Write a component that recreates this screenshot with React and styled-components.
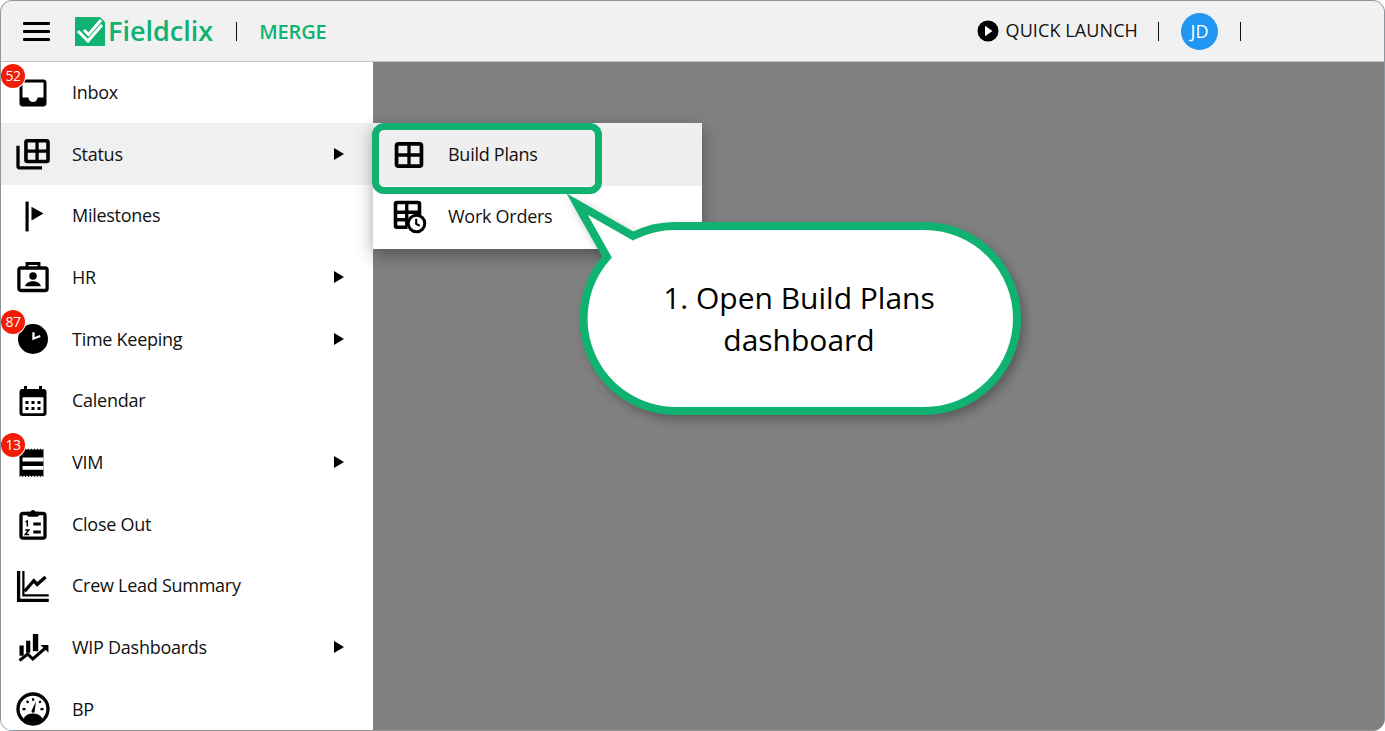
import React from "react";
import styled, { createGlobalStyle } from "styled-components";

const GREEN = "#0fb271";
const Global = createGlobalStyle`
  html, body { margin: 0; padding: 0; background: #fff; }
  body { font-family: "Open Sans", "Noto Sans", "Liberation Sans", sans-serif; color: #0b0b0b; }
`;
const Frame = styled.div`
  position: relative; width: 1385px; height: 731px; box-sizing: border-box;
  border: 1px solid #8d959c; border-radius: 12px; overflow: hidden;
  display: flex; flex-direction: column; background: #808080;
`;
const Header = styled.header`
  flex: 0 0 61px; box-sizing: border-box; height: 61px; background: #f1f1f1;
  border-bottom: 1px solid #c6c6c6; display: flex; align-items: center; padding-left: 22px;
`;
const Burger = styled.div`
  width: 27px; display: flex; flex-direction: column; gap: 5px; margin-right: 25px;
  span { display: block; height: 3px; background: #000; border-radius: 1px; }
`;
const LogoText = styled.span`
  font-size: 27px; font-weight: 600; color: ${GREEN}; margin-left: 3px; line-height: 30px;
`;
const Sep = styled.i`
  display: block; width: 1px; height: 19px; background: #111; margin: 0 ${p => p.$r}px 0 ${p => p.$l}px;
`;
const Merge = styled.span`
  font-size: 20px; font-weight: 600; color: ${GREEN}; letter-spacing: -0.1px;
`;
const Right = styled.div`
  margin-left: auto; display: flex; align-items: center; padding-right: 143px;
`;
const Quick = styled.span`
  font-size: 18px; margin: -2px 0 0 7px; letter-spacing: 0.1px; color: #111;
`;
const Avatar = styled.div`
  width: 37px; height: 37px; border-radius: 50%; background: #2196f3; color: #fff;
  display: flex; align-items: center; justify-content: center; font-size: 18px;
`;
const Body = styled.div`
  flex: 1; display: flex; min-height: 0;
`;
const Sidebar = styled.nav`
  width: 372px; background: #fff; overflow: hidden; flex: none;
`;
const Row = styled.div`
  height: 61.7px; display: flex; align-items: center; background: ${p => (p.$active ? "#f0f0f0" : "#fff")};
  padding-left: 14px; padding-right: 29px; box-sizing: border-box;
  &:first-child { height: 61px; }
`;
const IconWrap = styled.div`
  position: relative; width: 36px; height: 36px; flex: none; margin-right: 21px;
  svg { display: block; width: 36px; height: 36px; }
`;
const Badge = styled.span`
  position: absolute; left: -14px; top: -11px; width: 24px; height: 24px; border-radius: 50%;
  background: #f31c06; color: #fff; font-size: 14px; line-height: 24px; text-align: center;
  letter-spacing: -0.4px; box-shadow: 0 0 0 1px #fff;
`;
const Label = styled.span`
  font-size: 18px; letter-spacing: -0.27px; flex: 1; color: #111; margin-top: -0.4px;
`;
const Arrow = styled.i`
  width: 0; height: 0; border-left: 10px solid #000; border-top: 6px solid transparent; border-bottom: 6px solid transparent;
`;
const Content = styled.main`
  flex: 1; background: #808080;
`;
const Popup = styled.div`
  position: absolute; left: 372px; top: 122px; width: 329px; background: #fff;
  box-shadow: 0 6px 16px rgba(0,0,0,.35);
`;
const PopRow = styled.div`
  height: 63px; display: flex; align-items: center; background: ${p => (p.$active ? "#efefef" : "#fff")};
  padding: 0 0 ${p => (p.$active ? 0 : 3)}px 18px; box-sizing: border-box;
  svg { width: 36px; height: 36px; display: block; margin-right: 21px; flex: none; }
`;
const Highlight = styled.div`
  position: absolute; left: 371px; top: 122px; width: 230px; height: 71px; box-sizing: border-box;
  border: 7px solid ${GREEN}; border-radius: 12px;
`;
const Callout = styled.svg`
  position: absolute; left: 559px; top: 189px; width: 480px; height: 240px; overflow: visible;
  filter: drop-shadow(4px 5px 5px rgba(0,0,0,.28));
`;
const CalloutText = styled.div`
  position: absolute; left: 598px; top: 276px; width: 400px; text-align: center;
  font-size: 30px; line-height: 42px; color: #000;
`;

const S = { fill: "none", stroke: "#000", strokeWidth: 2 };
const I = ({ children }) => <svg viewBox="0 0 24 24">{children}</svg>;
const icons = {
  inbox: <I><path d="M19 3H4.99c-1.11 0-1.98.89-1.98 2L3 19c0 1.1.88 2 1.99 2H19c1.1 0 2-.9 2-2V5c0-1.11-.9-2-2-2zm0 12h-4c0 1.66-1.35 3-3 3s-3-1.34-3-3H4.99V5H19v10z" /></I>,
  status: <I><rect x="7.3" y="3.2" width="14.7" height="13.8" rx="1" {...S} strokeWidth="2.4" /><path d="M7.500 10.100h14.500M14.700 3.500v13" {...S} strokeWidth="2.2" /><path d="M2 6.500V20.200a1 1 0 0 0 1 1h15" {...S} strokeWidth="2.2" /></I>,
  milestones: <I><rect x="7" y="2.300" width="2.100" height="20" rx=".5" /><path d="M11 5.800l8 4.600-8 4.600z" /></I>,
  hr: <I><path d="M8 6.500V3h8v3.500" {...S} strokeWidth="1.900" /><rect x="2.600" y="6" width="18.800" height="15" rx="1.400" {...S} strokeWidth="2.200" /><circle cx="12" cy="11.400" r="2.500" /><path d="M6.800 18.200c0-2.200 3-3.400 5.200-3.400s5.200 1.200 5.200 3.400z" /></I>,
  time: <I><circle cx="12" cy="12" r="10" /><path d="M12.300 7.500v4.300l4.500-1.800" fill="none" stroke="#fff" strokeWidth="1.500" /></I>,
  calendar: <I><path d="M6 2h2v2h8V2h2v2h1a2 2 0 0 1 2 2v14a2 2 0 0 1-2 2H5a2 2 0 0 1-2-2V6a2 2 0 0 1 2-2h1z" /><rect x="5" y="9.500" width="14" height="10.600" rx=".5" fill="#fff" /><path d="M7 12h2v2H7zM11 12h2v2h-2zM15 12h2v2h-2zM7 16h2v2H7zM11 16h2v2h-2zM15 16h2v2h-2z" /></I>,
  vim: <I><path d="M3 3l1 1 1-1 1 1 1-1 1 1 1-1 1 1 1-1 1 1 1-1 1 1 1-1 1 1 1-1 1 1 1-1v19l-1-1-1 1-1-1-1 1-1-1-1 1-1-1-1 1-1-1-1 1-1-1-1 1-1-1-1 1-1-1-1 1z" /><path d="M5 9h14v2.600H5zM5 14.600h14v2.600H5z" fill="#fff" /></I>,
  close: <I><rect x="4" y="5" width="16" height="16.400" rx="1.400" {...S} strokeWidth="2.200" /><path d="M8 5.200V3.800h2.400a1.700 1.700 0 0 1 3.200 0H16v1.400a1.600 1.600 0 0 1-1 2H9a1.600 1.600 0 0 1-1-2z" /><path d="M7 10.600l1.200-.6v3.600M6.800 16h2.400l-2.400 3h2.600" fill="none" stroke="#000" strokeWidth="1" /><path d="M12.200 11h5v2h-5zM12.200 16.400h5v2h-5z" /></I>,
  crew: <I><path d="M2.400 2v19.600H22.500" {...S} strokeWidth="2.200" /><path d="M5.600 2v16.200h16.900" fill="none" stroke="#000" strokeWidth="1.500" /><path d="M6.500 15.500l6-7 2.300 2.400 5.600-4.900" {...S} strokeWidth="2.200" /></I>,
  wip: <I><rect x="3" y="11" width="2.800" height="6.800" /><rect x="7.400" y="7.800" width="2.800" height="8" /><rect x="11.900" y="3.300" width="3.600" height="11.500" /><path d="M3 21l5.500-4.300 3.400 3.300 8-7" {...S} strokeWidth="2" /><path d="M17 10.600h5.300v5.300z" /></I>,
  bp: <I><circle cx="12" cy="12" r="10" {...S} strokeWidth="2.200" /><path d="M5.500 18.600c1.400-2.400 3.600-3.600 6.500-3.600s5.100 1.200 6.500 3.600c-1.700 1.700-4 2.600-6.500 2.600s-4.800-.9-6.500-2.600z" /><path d="M11 13.200l3-6.200-.9 6.800a1.100 1.100 0 0 1-2.100-.6z" /><path d="M5 11.400h2v1.500H5zM7.300 7.200l1.200-1 1 1.200-1.200 1zM17 11.400h2v1.500h-2zM11.300 4.800h1.500v1.700h-1.500zM15.600 7.300l1.100-1.100 1 1.100-1.100 1z" /></I>,
};

const items = [
  ["inbox", "Inbox", false, 52],
  ["status", "Status", true],
  ["milestones", "Milestones"],
  ["hr", "HR", true],
  ["time", "Time Keeping", true, 87],
  ["calendar", "Calendar"],
  ["vim", "VIM", true, 13],
  ["close", "Close Out"],
  ["crew", "Crew Lead Summary"],
  ["wip", "WIP Dashboards", true],
  ["bp", "BP"],
];

export default function App() {
  return (
    <>
      <Global />
      <Frame>
        <Header>
          <Burger><span /><span /><span /></Burger>
          <svg width="30" height="29" viewBox="0 0 30 29">
            <rect width="30" height="29" fill={GREEN} />
            <path d="M25 0h5v5z" fill="#f1f1f1" />
            <path d="M3 14l10 10L27 8" fill="none" stroke="#fff" strokeWidth="3" />
            <path d="M9 13l4.500 4.500L26 3" fill="none" stroke="#fff" strokeWidth="3" />
          </svg>
          <LogoText>Fieldclix</LogoText>
          <Sep $l={23} $r={22} />
          <Merge>MERGE</Merge>
          <Right>
            <svg width="22" height="22" viewBox="0 0 22 22">
              <circle cx="11" cy="11" r="10.500" />
              <path d="M8 5.800l7.500 5.200-7.500 5.200z" fill="#fff" />
            </svg>
            <Quick>QUICK LAUNCH</Quick>
            <Sep $l={20} $r={22} />
            <Avatar>JD</Avatar>
            <Sep $l={22} $r={0} />
          </Right>
        </Header>
        <Body>
          <Sidebar>
            {items.map(([k, label, arrow, badge], i) => (
              <Row key={k} $active={i === 1}>
                <IconWrap>
                  {icons[k]}
                  {badge ? <Badge>{badge}</Badge> : null}
                </IconWrap>
                <Label>{label}</Label>
                {arrow ? <Arrow /> : null}
              </Row>
            ))}
          </Sidebar>
          <Content />
        </Body>
        <Popup>
          <PopRow $active>
            <svg viewBox="0 0 24 24">
              <rect x="3.700" y="4.600" width="16.600" height="14.800" rx="1.300" {...S} strokeWidth="2.500" />
              <path d="M4 12h16M12 5.500v13" {...S} strokeWidth="2.200" />
            </svg>
            <Label>Build Plans</Label>
          </PopRow>
          <PopRow>
            <svg viewBox="0 0 24 24">
              <path d="M11 19.500H4a1 1 0 0 1-1-1V4a1 1 0 0 1 1-1h14a1 1 0 0 1 1 1v7.500" {...S} strokeWidth="2.400" />
              <path d="M3 9.500h15M3 14.500h8M10.500 3.500V19" {...S} strokeWidth="2.200" />
              <circle cx="17" cy="17" r="5.500" fill="#fff" {...S} strokeWidth="2" />
              <path d="M16.800 13.800v3.500l2.400 1.300" {...S} strokeWidth="1.400" />
            </svg>
            <Label>Work Orders</Label>
          </PopRow>
        </Popup>
        <Highlight />
        <Callout viewBox="560 190 480 240">
          <path
            d="M633 236A92.500 92.500 0 0 1 675.500 226H924.500A92.500 92.500 0 0 1 924.500 411H675.500A92.500 92.500 0 0 1 607 257L577 204Z"
            fill="#fff" stroke={GREEN} strokeWidth="8" strokeMiterlimit="8"
          />
        </Callout>
        <CalloutText>1. Open Build Plans<br />dashboard</CalloutText>
      </Frame>
    </>
  );
}
